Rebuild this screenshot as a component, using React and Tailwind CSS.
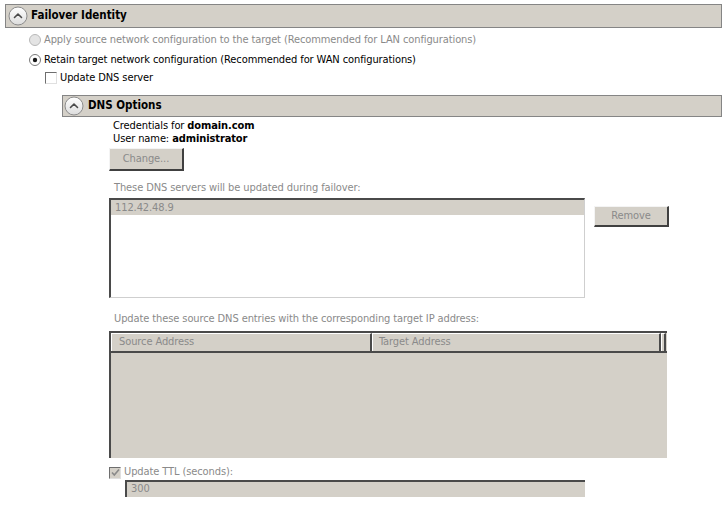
import React from "react";

function CircleUp() {
  return (
    <svg width="20" height="20" viewBox="0 0 20 20" className="shrink-0">
      <defs>
        <linearGradient id="cg" x1="0" y1="0" x2="0" y2="1">
          <stop offset="0" stopColor="#ffffff" />
          <stop offset="1" stopColor="#dcdcdc" />
        </linearGradient>
      </defs>
      <circle cx="10" cy="10" r="9" fill="url(#cg)" stroke="#8c8c8c" strokeWidth="1" />
      <path d="M6.5 11.5 L10 8 L13.5 11.5" fill="none" stroke="#4a4a4a" strokeWidth="1.6" strokeLinecap="round" strokeLinejoin="round" />
    </svg>
  );
}

function Radio({ checked, disabled }) {
  return (
    <svg width="12" height="12" viewBox="0 0 12 12" className="shrink-0">
      <circle cx="6" cy="6" r="5.5" fill={disabled ? "#e4e4e4" : "#ffffff"} stroke={disabled ? "#b8b8b8" : "#7a7a7a"} strokeWidth="1" />
      {checked && <circle cx="6" cy="6" r="2.2" fill="#1a1a1a" />}
    </svg>
  );
}

function Check({ checked, disabled }) {
  return (
    <div
      className={
        "w-[12px] h-[12px] shrink-0 border-t border-l border-t-[#6e6e6e] border-l-[#6e6e6e] border-b border-r border-b-[#e0e0e0] border-r-[#e0e0e0] flex items-center justify-center " +
        (disabled ? "bg-[#d4d0c8]" : "bg-white")
      }
    >
      {checked && (
        <svg width="9" height="9" viewBox="0 0 9 9">
          <path d="M1 4.5 L3.3 7 L8 1.5" fill="none" stroke="#8a8a8a" strokeWidth="1.6" />
        </svg>
      )}
    </div>
  );
}

export default function App() {
  return (
    <div className="w-[728px] h-[530px] bg-white text-[11px] tracking-[-0.1px] text-black font-['DejaVu_Sans_Condensed','DejaVu_Sans',sans-serif] overflow-hidden">
      {/* Header 1 */}
      <div className="ml-[5px] mr-[6px] mt-[4px] h-[24px] flex items-center bg-[#d4d0c8] border border-[#858585]">
        <div className="ml-[2px]">
          <CircleUp />
        </div>
        <span className="ml-[3px] font-bold text-[11.5px] tracking-normal">Failover Identity</span>
      </div>

      {/* Radios */}
      <div className="ml-[29px] mt-[5px] h-[14px] flex items-center gap-[3px] text-[#8a8a8a]">
        <Radio disabled />
        <span>Apply source network configuration to the target (Recommended for LAN configurations)</span>
      </div>
      <div className="ml-[29px] mt-[6px] h-[14px] flex items-center gap-[3px]">
        <Radio checked />
        <span>Retain target network configuration (Recommended for WAN configurations)</span>
      </div>
      <div className="ml-[45px] mt-[4px] h-[14px] flex items-center gap-[3px]">
        <Check />
        <span>Update DNS server</span>
      </div>

      {/* Header 2 */}
      <div className="ml-[62px] mr-[6px] mt-[10px] h-[22px] flex items-center bg-[#d4d0c8] border border-[#858585]">
        <div className="ml-[1px]">
          <CircleUp />
        </div>
        <span className="ml-[4px] font-bold text-[11.5px] tracking-normal">DNS Options</span>
      </div>

      {/* DNS content */}
      <div className="ml-[109px] w-[560px]">
        <div className="ml-[4px] mt-[2px] leading-[13px]">
          <div>
            Credentials for <span className="font-bold">domain.com</span>
          </div>
          <div>
            User name: <span className="font-bold">administrator</span>
          </div>
        </div>

        <div className="mt-[3px] w-[75px] h-[23px] flex items-center justify-center bg-[#d4d0c8] border-t border-l border-t-[#f4f4f4] border-l-[#f4f4f4] border-b-2 border-r-2 border-b-[#404040] border-r-[#404040] text-[#8a8a8a]">
          Change...
        </div>

        <div className="ml-[5px] mt-[10px] h-[13px] leading-[13px] text-[#8a8a8a]">
          These DNS servers will be updated during failover:
        </div>

        <div className="mt-[4px] flex items-start">
          <div className="w-[476px] h-[100px] bg-white border-t-2 border-l-2 border-t-[#4a4a4a] border-l-[#4a4a4a] border-b border-r border-b-[#cfcfcf] border-r-[#cfcfcf]">
            <div className="h-[15px] bg-[#d4d0c8] pl-[4px] leading-[15px] text-[#8a8a8a]">112.42.48.9</div>
          </div>
          <div className="ml-[9px] mt-[8px] w-[75px] h-[21px] flex items-center justify-center bg-[#d4d0c8] border-t border-l border-t-[#f4f4f4] border-l-[#f4f4f4] border-b-2 border-r-2 border-b-[#404040] border-r-[#404040] text-[#8a8a8a]">
            Remove
          </div>
        </div>

        <div className="ml-[5px] mt-[14px] h-[13px] leading-[13px] text-[#8a8a8a]">
          Update these source DNS entries with the corresponding target IP address:
        </div>

        <div className="mt-[6px] w-[558px] h-[127px] bg-[#d4d0c8] border-t-2 border-l-2 border-t-[#4a4a4a] border-l-[#4a4a4a]">
          <div className="flex h-[20px] border-b-2 border-b-[#4a4a4a] text-[#8a8a8a]">
            <div className="w-[261px] h-full flex items-center pl-[7px] border-l border-t border-l-white border-t-white border-r-2 border-r-[#4a4a4a]">
              Source Address
            </div>
            <div className="w-[289px] h-full flex items-center pl-[6px] border-l border-t border-l-white border-t-white border-r-2 border-r-[#4a4a4a]">
              Target Address
            </div>
            <div className="w-[5px] h-full border-l border-t border-l-white border-t-white border-r-2 border-r-[#4a4a4a]"></div>
          </div>
        </div>

        <div className="mt-[8px] h-[13px] flex items-center gap-[3px] text-[#8a8a8a]">
          <Check checked disabled />
          <span>Update TTL (seconds):</span>
        </div>
        <div className="ml-[16px] mt-[1px] w-[460px] h-[17px] bg-[#d4d0c8] border-t-2 border-l-2 border-t-[#4a4a4a] border-l-[#4a4a4a] pl-[4px] flex items-center text-[#8a8a8a]">
          300
        </div>
      </div>
    </div>
  );
}
